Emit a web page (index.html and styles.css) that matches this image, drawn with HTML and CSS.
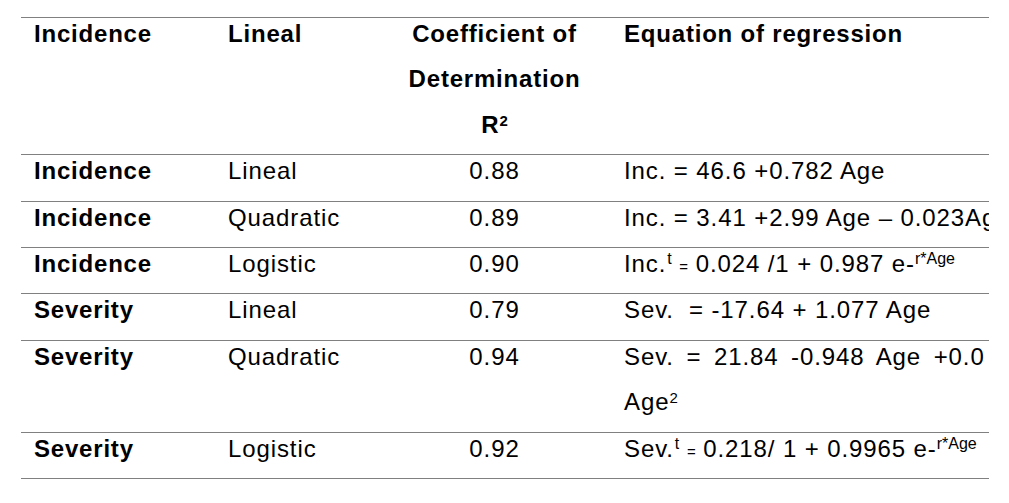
FILE: index.html
```html
<!DOCTYPE html>
<html>
<head>
<meta charset="utf-8">
<link rel="stylesheet" href="styles.css">
</head>
<body>
<div class="frame">
<table class="tbl">
  <colgroup>
    <col class="c1"><col class="c2"><col class="c3"><col class="c4">
  </colgroup>
  <thead>
    <tr>
      <th><div class="in">Incidence</div></th>
      <th><div class="in">Lineal</div></th>
      <th class="mid"><div class="in">Coefficient of<br>Determination<br>R<sup class="sup2">2</sup></div></th>
      <th><div class="in">Equation of regression</div></th>
    </tr>
  </thead>
  <tbody>
    <tr>
      <td class="b"><div class="in">Incidence</div></td>
      <td><div class="in">Lineal</div></td>
      <td class="mid"><div class="in">0.88</div></td>
      <td><div class="in">Inc. = 46.6 +0.782 Age</div></td>
    </tr>
    <tr>
      <td class="b"><div class="in">Incidence</div></td>
      <td><div class="in">Quadratic</div></td>
      <td class="mid"><div class="in">0.89</div></td>
      <td><div class="in">Inc. = 3.41 +2.99 Age – 0.023Age</div></td>
    </tr>
    <tr>
      <td class="b"><div class="in">Incidence</div></td>
      <td><div class="in">Logistic</div></td>
      <td class="mid"><div class="in">0.90</div></td>
      <td><div class="in">Inc.<sup class="t">t</sup> <sub class="eqs">=</sub> 0.024 /1 + 0.987 e-<sup class="ex">r*Age</sup></div></td>
    </tr>
    <tr>
      <td class="b"><div class="in">Severity</div></td>
      <td><div class="in">Lineal</div></td>
      <td class="mid"><div class="in">0.79</div></td>
      <td><div class="in">Sev.&nbsp; = -17.64 + 1.077 Age</div></td>
    </tr>
    <tr>
      <td class="b"><div class="in">Severity</div></td>
      <td><div class="in">Quadratic</div></td>
      <td class="mid"><div class="in">0.94</div></td>
      <td><div class="in"><span class="wide">Sev. = 21.84 -0.948 Age +0.0</span><br>Age<sup class="sup2">2</sup></div></td>
    </tr>
    <tr>
      <td class="b"><div class="in">Severity</div></td>
      <td><div class="in">Logistic</div></td>
      <td class="mid"><div class="in">0.92</div></td>
      <td><div class="in">Sev.<sup class="t">t</sup> <sub class="eqs">=</sub> 0.218/ 1 + 0.9965 e-<sup class="ex">r*Age</sup></div></td>
    </tr>
  </tbody>
</table>
</div>
</body>
</html>
```

FILE: styles.css
```css
html, body {
  margin: 0;
  padding: 0;
  background: #ffffff;
}

body {
  padding: 17px 0 0 21px;
  font-family: "Liberation Sans", Arial, sans-serif;
  color: #000000;
}

.frame {
  width: 968px;
  overflow: hidden;
}

.tbl {
  border-collapse: collapse;
  table-layout: fixed;
  width: 1040px;
  font-size: 24px;
  letter-spacing: 0.9px;
}

.c1 { width: 194px; }
.c2 { width: 183px; }
.c3 { width: 193px; }
.c4 { width: 470px; }

.tbl th,
.tbl td {
  padding: 0 13px;
  vertical-align: top;
  text-align: left;
  line-height: 45.4px;
  border-top: 1px solid #808080;
  border-bottom: 1px solid #808080;
  white-space: nowrap;
}

.tbl th {
  font-weight: bold;
  letter-spacing: 0.8px;
}

.tbl td.b {
  font-weight: bold;
  letter-spacing: 0.8px;
}

.tbl th.mid,
.tbl td.mid {
  text-align: center;
  padding: 0;
}

.tbl th:last-child,
.tbl td:last-child {
  padding-left: 33px;
}

.in {
  margin: -7px 0 7px 0;
}

.sup2 {
  font-size: 15px;
  vertical-align: top;
  line-height: 1;
  position: relative;
  top: 11px;
  letter-spacing: 0;
}

.t {
  font-size: 16px;
  vertical-align: top;
  line-height: 1;
  position: relative;
  top: 10px;
  letter-spacing: 0;
  margin-left: 1px;
}

.eqs {
  font-size: 15px;
  vertical-align: baseline;
  line-height: 1;
  letter-spacing: 0;
}

.ex {
  font-size: 16px;
  vertical-align: top;
  line-height: 1;
  position: relative;
  top: 10px;
  letter-spacing: 0;
}

.wide {
  word-spacing: 5px;
}
```
